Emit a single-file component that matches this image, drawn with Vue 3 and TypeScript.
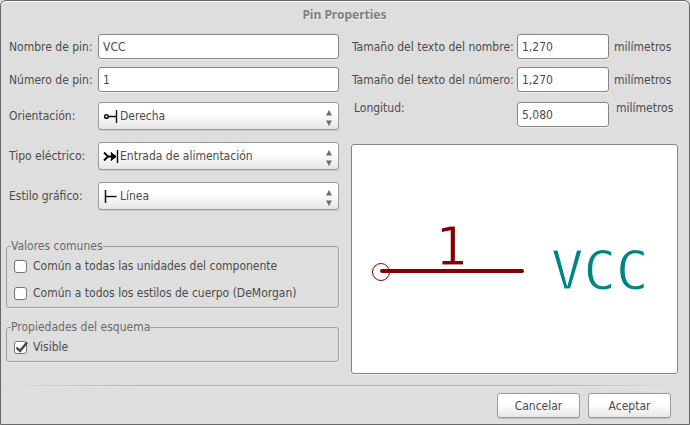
<script setup lang="ts">
import { ref } from 'vue'

interface Choice {
  id: string
  label: string
  options: string[]
}

const pinName = ref('VCC')
const pinNumber = ref('1')
const nameSize = ref('1,270')
const numberSize = ref('1,270')
const pinLength = ref('5,080')

const choices: Choice[] = [
  { id: 'orientation', label: 'Orientación:', options: ['Derecha'] },
  { id: 'electrical', label: 'Tipo eléctrico:', options: ['Entrada de alimentación'] },
  { id: 'graphic', label: 'Estilo gráfico:', options: ['Línea'] },
]

const allUnits = ref(false)
const allStyles = ref(false)
const visible = ref(true)
</script>

<template>
  <form class="dialog" @submit.prevent>
    <h1 class="title">Pin Properties</h1>

    <div class="columns">
      <div class="left">
        <div class="row">
          <label for="pin-name">Nombre de pin:</label>
          <input id="pin-name" v-model="pinName" class="field" type="text" />
        </div>
        <div class="row">
          <label for="pin-number">Número de pin:</label>
          <input id="pin-number" v-model="pinNumber" class="field" type="text" />
        </div>

        <div class="choices">
          <div v-for="choice in choices" :key="choice.id" class="row">
            <label :for="choice.id">{{ choice.label }}</label>
            <div class="combo">
              <select :id="choice.id">
                <option v-for="option in choice.options" :key="option">{{ option }}</option>
              </select>
              <svg class="symbol" viewBox="0 0 16 16" aria-hidden="true">
                <g v-if="choice.id === 'orientation'" fill="none" stroke="#111">
                  <circle cx="3.5" cy="8.5" r="1.8" stroke-width="1.5" />
                  <path d="M5.5 8.5H13" stroke-width="1.5" />
                  <path d="M13.5 2v13" stroke-width="1.4" />
                </g>
                <g v-else-if="choice.id === 'electrical'" fill="none" stroke="#000">
                  <path d="M1 4.5l4 4l-4 4" stroke-width="1.8" />
                  <path d="M4 8.5H13" stroke-width="2" />
                  <path d="M8 4.5l5 4l-5 4l1-4z" fill="#000" stroke-width="1" />
                  <path d="M14.5 2v13" stroke-width="1.4" />
                </g>
                <g v-else fill="none" stroke="#111">
                  <path d="M2.5 2v13" stroke-width="1.5" />
                  <path d="M3 8.5H13.5" stroke-width="1.4" />
                </g>
              </svg>
              <svg class="arrows" viewBox="0 0 6 16" aria-hidden="true">
                <path d="M3 0L6 5.5H0zM3 16L6 10.5H0z" fill="#6e6e6e" />
              </svg>
            </div>
          </div>
        </div>

        <fieldset class="group common">
          <legend>Valores comunes</legend>
          <label class="check">
            <input v-model="allUnits" type="checkbox" />
            <span class="box"></span>
            Común a todas las unidades del componente
          </label>
          <label class="check">
            <input v-model="allStyles" type="checkbox" />
            <span class="box"></span>
            Común a todos los estilos de cuerpo (DeMorgan)
          </label>
        </fieldset>

        <fieldset class="group schematic">
          <legend>Propiedades del esquema</legend>
          <label class="check">
            <input v-model="visible" type="checkbox" />
            <span class="box">
              <svg v-if="visible" viewBox="0 0 15 15" aria-hidden="true">
                <path d="M3.5 7.5L7 11L14 2.5" fill="none" stroke="#444" stroke-width="2.4" />
              </svg>
            </span>
            Visible
          </label>
        </fieldset>
      </div>

      <div class="right">
        <div class="measure">
          <label for="name-size">Tamaño del texto del nombre:</label>
          <input id="name-size" v-model="nameSize" class="field" type="text" />
          <span class="unit">milímetros</span>
        </div>
        <div class="measure">
          <label for="number-size">Tamaño del texto del número:</label>
          <input id="number-size" v-model="numberSize" class="field" type="text" />
          <span class="unit">milímetros</span>
        </div>
        <div class="measure length">
          <label for="pin-length">Longitud:</label>
          <input id="pin-length" v-model="pinLength" class="field" type="text" />
          <span class="unit">milímetros</span>
        </div>

        <div class="preview">
          <svg viewBox="0 0 325 228">
            <g fill="none" stroke="#840000">
              <circle cx="29" cy="127" r="8.5" stroke-width="1" />
              <path d="M30 126H170" stroke-width="4" stroke-linecap="round" />
            </g>
            <text class="pin-number" x="99" y="120" text-anchor="middle">{{ pinNumber }}</text>
            <text class="pin-name" x="199" y="144">{{ pinName }}</text>
          </svg>
        </div>
      </div>
    </div>

    <div class="separator"></div>
    <div class="actions">
      <button type="button">Cancelar</button>
      <button type="submit">Aceptar</button>
    </div>
  </form>
</template>

<style>
body {
  background: #dcdcdc;
}
</style>

<style scoped>
.dialog {
  box-sizing: border-box;
  min-height: 100vh;
  padding: 0 11px 5px 5px;
  border: 1px solid #686868;
  border-radius: 6px 6px 0 0;
  background: #dedede;
  box-shadow: inset 0 1px #fff;
  color: #4c4c4c;
  font: 12px/16px "DejaVu Sans Condensed", "DejaVu Sans", sans-serif;
}

.title {
  margin: 0;
  padding: 6px 0 11px 5px;
  color: #7f7f7f;
  font: bold 12px/16px "Noto Sans", sans-serif;
  text-align: center;
  text-shadow: 0 1px #f4f4f4;
}

.columns {
  display: grid;
  grid-template-columns: minmax(0, 333fr) minmax(0, 327fr);
  gap: 12px;
}

.left,
.right {
  display: flex;
  flex-direction: column;
}

.row {
  display: grid;
  grid-template-columns: 89px 1fr;
  align-items: center;
  padding-left: 3px;
}

.row label,
.measure label {
  white-space: nowrap;
}

.row + .row,
.measure + .measure {
  margin-top: 8px;
}

.choices {
  display: flex;
  flex-direction: column;
  gap: 12px;
  margin-top: 10px;
}

.choices .row {
  margin-top: 0;
}

.field {
  box-sizing: border-box;
  width: 100%;
  height: 25px;
  padding: 0 4px;
  border: 1px solid #858585;
  border-radius: 3px;
  outline: none;
  background: #fff;
  box-shadow: 0 1px #eee;
  color: #4c4c4c;
  font: inherit;
}

.combo {
  position: relative;
}

.combo select {
  display: block;
  width: 100%;
  height: 28px;
  padding: 0 20px 0 21px;
  border: 1px solid #999;
  border-radius: 3px;
  appearance: none;
  background: linear-gradient(#fff 40%, #e6e6e6);
  box-shadow: 0 1px #c8c8c8;
  color: #4c4c4c;
  font: inherit;
}

.symbol {
  position: absolute;
  top: 6px;
  left: 5px;
  width: 16px;
  height: 16px;
  pointer-events: none;
}

.arrows {
  position: absolute;
  top: 8px;
  right: 7px;
  width: 6px;
  height: 16px;
  pointer-events: none;
}

.group {
  min-width: 0;
  margin: 0;
  border: 1px solid #a0a0a0;
  border-radius: 3px;
  box-shadow: 1px 1px #eaeaea;
}

.group legend {
  padding: 0;
  color: #6a6a6a;
}

.common {
  display: flex;
  flex-direction: column;
  gap: 11px;
  margin-top: 28px;
  padding: 4px 7px 6px 4px;
}

.schematic {
  margin-top: 11px;
  padding: 4px 7px 6px 4px;
}

.check {
  display: flex;
  align-items: center;
  gap: 6px;
  padding-left: 3px;
}

.check input {
  position: absolute;
  opacity: 0;
}

.box {
  box-sizing: border-box;
  flex: none;
  width: 13px;
  height: 13px;
  border: 1px solid #747474;
  border-radius: 3px;
  background: #fff;
}

.box svg {
  display: block;
  width: 15px;
  height: 15px;
  margin: -2px;
}

.measure {
  display: grid;
  grid-template-columns: minmax(0, 1fr) 92px 64px;
  align-items: center;
  column-gap: 5px;
  padding-left: 1px;
}

.measure.length {
  align-items: start;
  margin-top: 10px;
}

.length label,
.length .unit {
  padding-left: 2px;
  line-height: 12px;
}

.preview {
  flex: 1;
  margin-top: 17px;
  border: 1px solid #858585;
  border-radius: 3px;
  background: #fff;
  box-shadow: 0 1px #eee;
}

.preview svg {
  display: block;
  width: 100%;
}

.pin-number,
.pin-name {
  stroke: #fff;
  stroke-width: 1px;
  font: 54px "DejaVu Sans Mono", monospace;
}

.pin-number {
  fill: #840000;
}

.pin-name {
  fill: #008484;
}

.separator {
  height: 1px;
  margin: 11px 0 7px;
  background: linear-gradient(to right, transparent, #b0b0b0 20%, #b0b0b0 80%, transparent);
  box-shadow: 0 1px #e4e4e4;
}

.actions {
  display: flex;
  justify-content: flex-end;
  gap: 8px;
  padding-right: 7px;
}

.actions button {
  width: 83px;
  height: 25px;
  padding: 0;
  border: 1px solid #999;
  border-radius: 3px;
  background: linear-gradient(#fff 40%, #e8e8e8);
  box-shadow: 0 1px #c0c0c0;
  color: #4c4c4c;
  font: inherit;
}

.check input:focus-visible + .box,
.field:focus-visible,
.combo select:focus-visible {
  outline: 1px solid #5b8fc7;
}
</style>
